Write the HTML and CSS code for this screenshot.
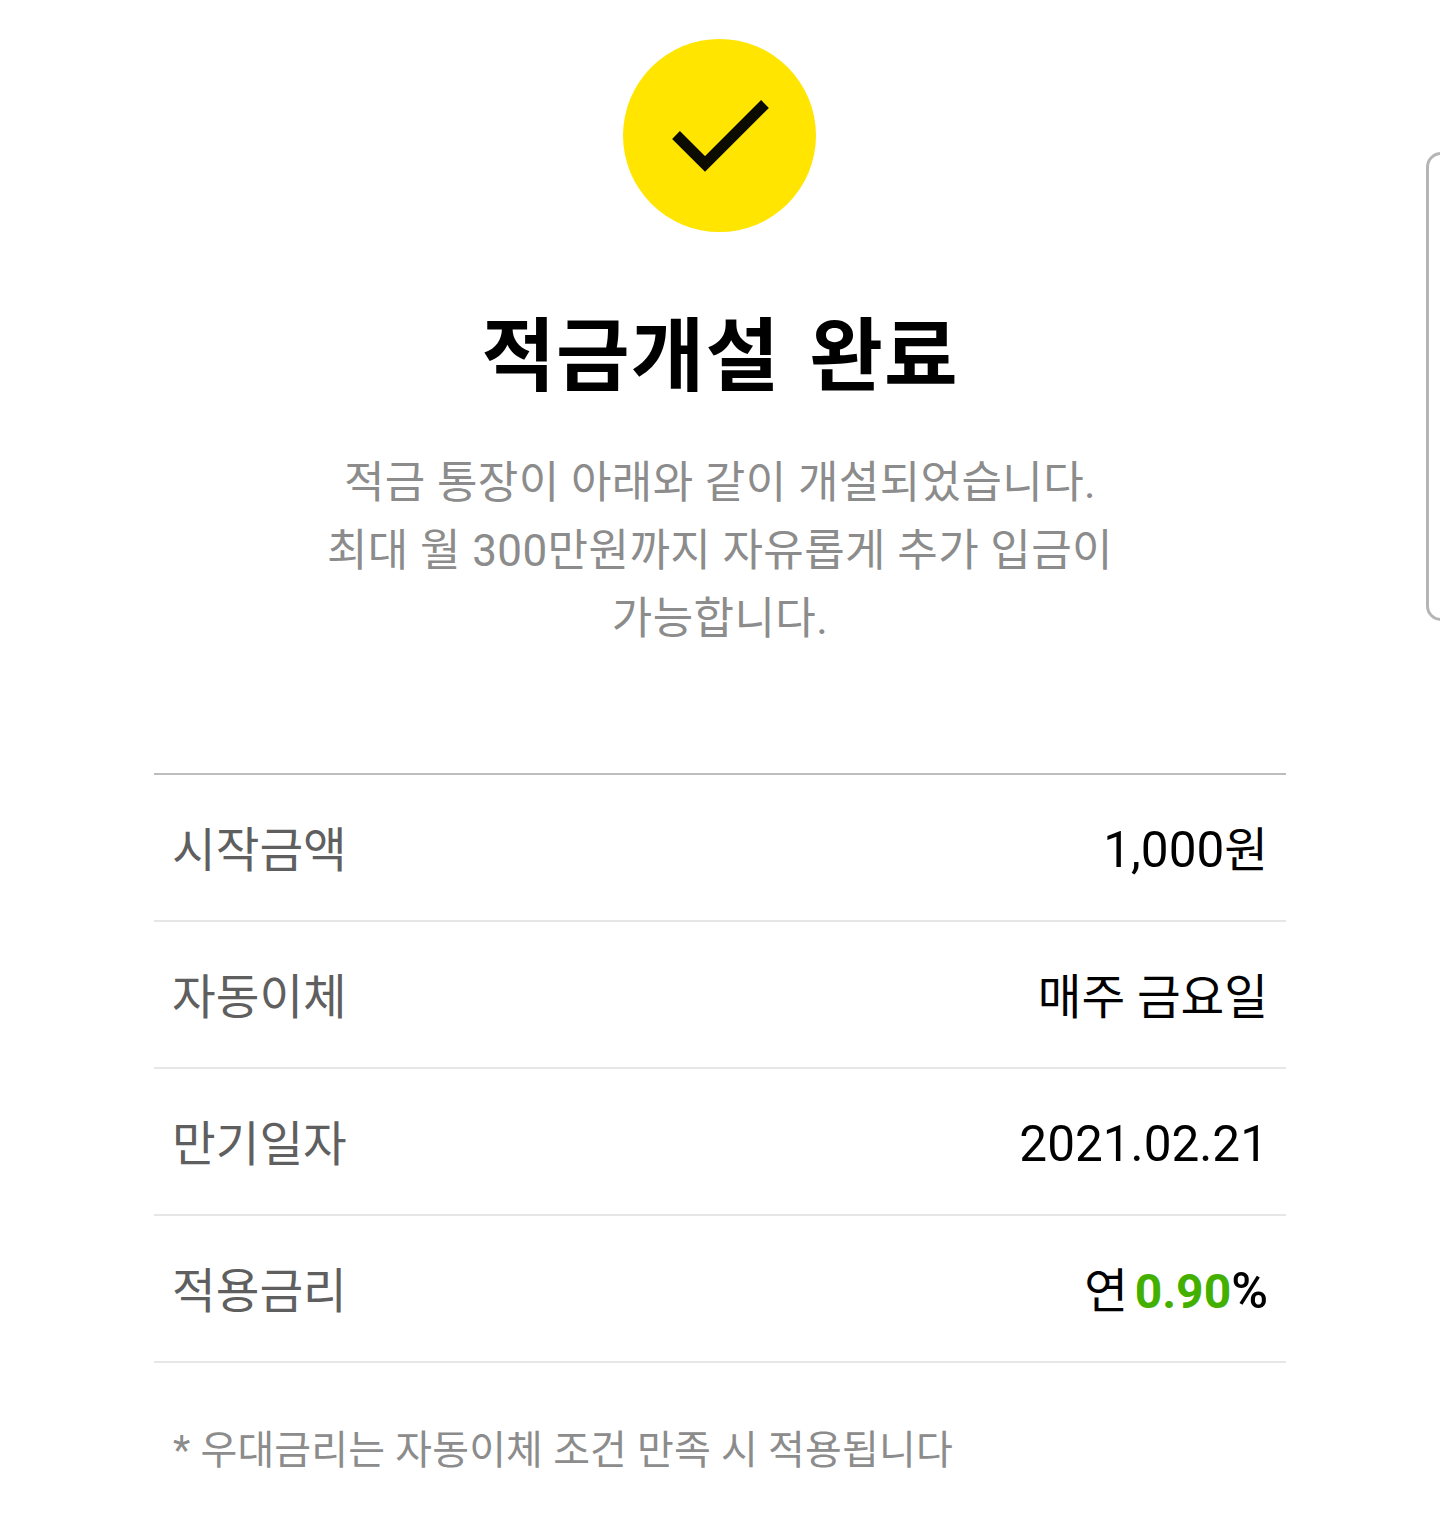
FILE: index.html
```html
<!DOCTYPE html>
<html lang="ko">
<head>
    <meta charset="UTF-8">
    <title>적금개설 완료</title>
    <link rel="stylesheet" href="styles.css">
</head>
<body>
    <div class="edge"></div>
    <div class="page">
        <div class="check">
            <svg width="193" height="193" viewBox="0 0 193 193">
                <path d="M53 96 L82 125 L142 65" fill="none" stroke="#0b0b00" stroke-width="11"/>
            </svg>
        </div>
        <h1 class="title">적금개설 완료</h1>
        <p class="desc">적금 통장이 아래와 같이 개설되었습니다.<br>최대 월 300만원까지 자유롭게 추가 입금이<br>가능합니다.</p>
        <ul class="info">
            <li><span class="label">시작금액</span><span class="value"><span class="num">1,000</span>원</span></li>
            <li><span class="label">자동이체</span><span class="value">매주 금요일</span></li>
            <li><span class="label">만기일자</span><span class="value"><span class="num">2021.02.21</span></span></li>
            <li><span class="label">적용금리</span><span class="value tight">연 <b class="rate">0.90</b><b class="pct">%</b></span></li>
        </ul>
        <p class="note">* 우대금리는 자동이체 조건 만족 시 적용됩니다</p>
    </div>
</body>
</html>
```

FILE: styles.css
```css
* {
    margin: 0;
    padding: 0;
    box-sizing: border-box;
}
body {
    background-color: #fff;
    font-family: Roboto, "Noto Sans CJK KR", sans-serif;
    height: 1513px;
    overflow: hidden;
}
.page {
    width: 1132px;
    margin: 0 auto;
    padding-top: 39px;
    text-align: center;
}
.check {
    width: 193px;
    height: 193px;
    margin-left: 469px;
    border-radius: 50%;
    background-color: #ffe500;
}
.check svg {
    display: block;
}
.title {
    margin-top: 75px;
    font-size: 80px;
    line-height: 100px;
    font-weight: 700;
    letter-spacing: 1.1px;
    word-spacing: 8px;
    color: #000;
}
.desc {
    margin-top: 42px;
    font-size: 44px;
    line-height: 68px;
    letter-spacing: 0.4px;
    color: #8c8c8c;
}
.info {
    list-style: none;
    margin-top: 120px;
    border-top: 2px solid #bdbdbd;
}
.info li {
    display: flex;
    justify-content: space-between;
    align-items: center;
    height: 147px;
    padding: 6px 18px 0;
    border-bottom: 2px solid #e6e6e6;
}
.label {
    font-size: 47.5px;
    line-height: 60px;
    color: #5f5f5f;
}
.value {
    font-size: 47.5px;
    line-height: 60px;
    color: #000;
}
.num {
    font-size: 49.5px;
}
.tight {
    word-spacing: -5px;
}
.rate {
    font-size: 48px;
    color: #43b000;
    font-weight: 700;
}
.pct {
    font-size: 50px;
    font-weight: 500;
}
.note {
    margin-top: 60px;
    padding-left: 19px;
    text-align: left;
    font-size: 40px;
    line-height: 56px;
    letter-spacing: 0.15px;
    color: #8c8c8c;
}
.edge {
    position: absolute;
    left: 1426px;
    top: 152px;
    width: 30px;
    height: 469px;
    border: 3px solid #b5b5b5;
    border-radius: 18px;
}
```
